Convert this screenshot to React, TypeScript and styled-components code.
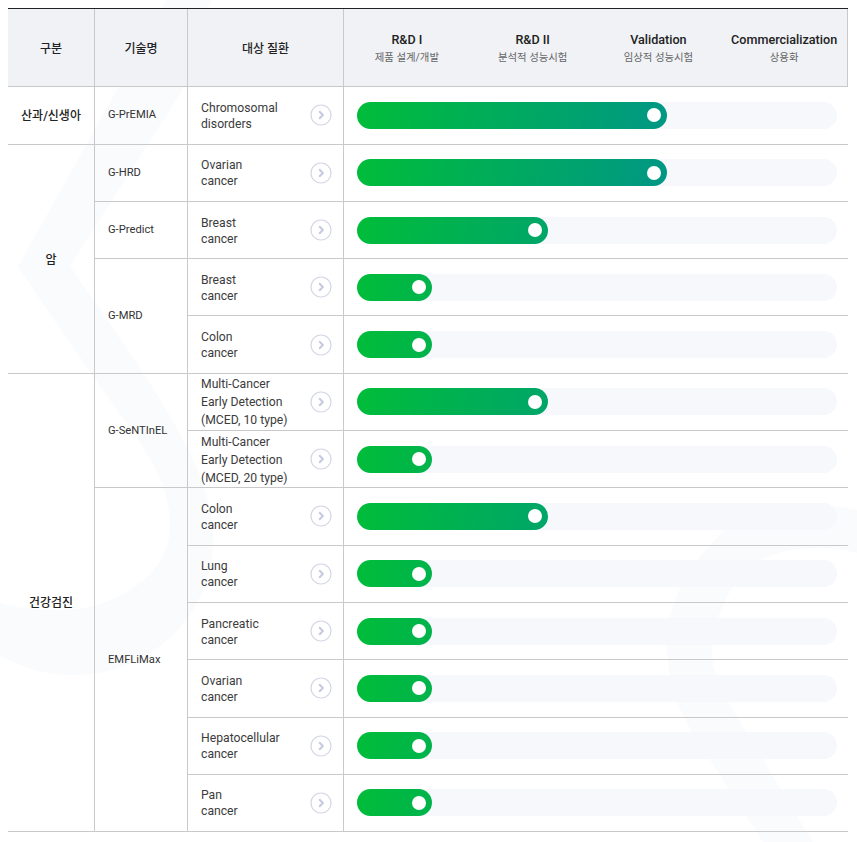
import React from "react";
import styled, { createGlobalStyle } from "styled-components";

const GlobalStyle = createGlobalStyle`
  html, body {
    margin: 0;
    padding: 0;
    background: #fff;
  }
  body {
    font-family: Roboto, "Noto Sans CJK KR", "Noto Sans", sans-serif;
    color: #333;
  }
`;

type Stage = { title: string; sub: string };
type Row = { disease: string[]; width: number; tall?: boolean };
type Tech = { name: string; rows: Row[] };
type Group = { name: string; techs: Tech[] };

const LONG = 310;
const MID = 191;
const SHORT = 75;

const stages: Stage[] = [
  { title: "R&D I", sub: "제품 설계/개발" },
  { title: "R&D II", sub: "분석적 성능시험" },
  { title: "Validation", sub: "임상적 성능시험" },
  { title: "Commercialization", sub: "상용화" },
];

const groups: Group[] = [
  {
    name: "산과/신생아",
    techs: [{ name: "G-PrEMIA", rows: [{ disease: ["Chromosomal", "disorders"], width: LONG }] }],
  },
  {
    name: "암",
    techs: [
      { name: "G-HRD", rows: [{ disease: ["Ovarian", "cancer"], width: LONG }] },
      { name: "G-Predict", rows: [{ disease: ["Breast", "cancer"], width: MID }] },
      {
        name: "G-MRD",
        rows: [
          { disease: ["Breast", "cancer"], width: SHORT },
          { disease: ["Colon", "cancer"], width: SHORT },
        ],
      },
    ],
  },
  {
    name: "건강검진",
    techs: [
      {
        name: "G-SeNTInEL",
        rows: [
          { disease: ["Multi-Cancer", "Early Detection", "(MCED, 10 type)"], width: MID, tall: true },
          { disease: ["Multi-Cancer", "Early Detection", "(MCED, 20 type)"], width: SHORT, tall: true },
        ],
      },
      {
        name: "EMFLiMax",
        rows: [
          { disease: ["Colon", "cancer"], width: MID },
          { disease: ["Lung", "cancer"], width: SHORT },
          { disease: ["Pancreatic", "cancer"], width: SHORT },
          { disease: ["Ovarian", "cancer"], width: SHORT },
          { disease: ["Hepatocellular", "cancer"], width: SHORT },
          { disease: ["Pan", "cancer"], width: SHORT },
        ],
      },
    ],
  },
];

const Page = styled.div`
  position: relative;
  width: 857px;
  height: 842px;
  overflow: hidden;
  padding: 8px 9px 0 8px;
  box-sizing: border-box;
`;

const Watermark = styled.svg`
  position: absolute;
  left: 0;
  top: 0;
  width: 857px;
  height: 842px;
  pointer-events: none;
`;

const Table = styled.div`
  position: relative;
  display: grid;
  grid-template-columns: 87px 93px 156px 504px;
  grid-template-rows: 78.28px repeat(13, 57.3px);
  border-top: 1px solid #222;
`;

const Cell = styled.div`
  box-sizing: border-box;
  display: flex;
  align-items: center;
  border-bottom: 1px solid #c9c9c9;
`;

const HeadCell = styled(Cell)`
  justify-content: center;
  background: #f0f2f6;
  border-right: 1px solid #c9c9c9;
  font-size: 12px;
  font-weight: 500;
  color: #222;

  &:last-of-type {
    border-right: 0;
  }
`;

const StageList = styled(HeadCell)`
  align-items: stretch;
`;

const StageItem = styled.div`
  flex: 1;
  display: flex;
  flex-direction: column;
  align-items: center;
  justify-content: center;
  padding-top: 2px;
`;

const StageTitle = styled.div`
  font-size: 12.6px;
  line-height: 18px;
  font-weight: 500;
  color: #222;
`;

const StageSub = styled.div`
  font-size: 10.4px;
  line-height: 18px;
  font-weight: 400;
  color: #666;
`;

const GroupCell = styled(Cell)<{ $row: number; $span: number }>`
  grid-column: 1;
  grid-row: ${(p) => p.$row} / span ${(p) => p.$span};
  justify-content: center;
  padding-bottom: 1px;
  border-right: 1px solid #c9c9c9;
  font-size: 12px;
  font-weight: 500;
  color: #222;
`;

const TechCell = styled(Cell)<{ $row: number; $span: number }>`
  grid-column: 2;
  grid-row: ${(p) => p.$row} / span ${(p) => p.$span};
  padding: 0 0 1px 13px;
  border-right: 1px solid #c9c9c9;
  font-size: 11.2px;
  color: #333;
`;

const DiseaseCell = styled(Cell)<{ $row: number }>`
  grid-column: 3;
  grid-row: ${(p) => p.$row};
  justify-content: space-between;
  padding: 0 11px 0 13px;
  border-right: 1px solid #c9c9c9;
`;

const DiseaseName = styled.div<{ $tall?: boolean }>`
  padding-top: 1px;
  font-size: 12.2px;
  line-height: ${(p) => (p.$tall ? "18px" : "16px")};
  color: #3c3c3c;
  white-space: nowrap;
`;

const BarCell = styled(Cell)<{ $row: number }>`
  grid-column: 4;
  grid-row: ${(p) => p.$row};
  padding: 0 11px 0 13px;
`;

const Track = styled.div`
  flex: 1;
  height: 27px;
  border-radius: 14px;
  background: #f6f8fc;
`;

const Fill = styled.div`
  position: relative;
  height: 100%;
  border-radius: 14px;
  background-image: linear-gradient(100deg, #00bd39 0%, #009785 100%);
  background-size: 310px 100%;
  background-repeat: no-repeat;
`;

const Knob = styled.span`
  position: absolute;
  right: 6.5px;
  top: 50%;
  width: 14px;
  height: 14px;
  margin-top: -7px;
  border-radius: 50%;
  background: #fff;
`;

const ArrowIcon = () => (
  <svg width="22" height="22" viewBox="0 0 22 22" fill="none">
    <circle cx="11" cy="11" r="10" stroke="#d3d6e4" strokeWidth="1.2" fill="#fff" />
    <path d="M9.2 7.2 12.8 11l-3.6 3.8" stroke="#c6cade" strokeWidth="2" />
  </svg>
);

const App = () => {
  let row = 2;
  const cells: React.ReactNode[] = [];

  groups.forEach((group) => {
    const groupSpan = group.techs.reduce((n, t) => n + t.rows.length, 0);
    cells.push(
      <GroupCell key={group.name} $row={row} $span={groupSpan}>
        {group.name}
      </GroupCell>
    );
    group.techs.forEach((tech) => {
      cells.push(
        <TechCell key={tech.name} $row={row} $span={tech.rows.length}>
          {tech.name}
        </TechCell>
      );
      tech.rows.forEach((item) => {
        cells.push(
          <DiseaseCell key={`d${row}`} $row={row}>
            <DiseaseName $tall={item.tall}>
              {item.disease.map((line) => (
                <div key={line}>{line}</div>
              ))}
            </DiseaseName>
            <ArrowIcon />
          </DiseaseCell>,
          <BarCell key={`b${row}`} $row={row}>
            <Track>
              <Fill style={{ width: item.width }}>
                <Knob />
              </Fill>
            </Track>
          </BarCell>
        );
        row += 1;
      });
    });
  });

  return (
    <>
      <GlobalStyle />
      <Page>
        <Watermark viewBox="0 0 857 842">
          <path
            fill="#fafbfd"
            d="M167 0 18 267 90 372C130 430 170 470 170 527 170 575 115 610 60 610 35 610 15 607 0 603V655C25 670 50 675 75 675 150 675 213 615 213 540 213 480 175 425 145 375L70 266 185 86 211 0Z"
          />
          <path
            fill="#fafbfd"
            d="M857 510C800 498 745 505 715 540 680 575 667 610 667 650 668 690 685 725 710 760L763 842H813L733 710C718 685 710 665 712 645 716 610 735 575 760 560 790 545 830 545 857 553Z"
          />
        </Watermark>
        <Table>
          <HeadCell>구분</HeadCell>
          <HeadCell>기술명</HeadCell>
          <HeadCell>대상 질환</HeadCell>
          <StageList>
            {stages.map((stage) => (
              <StageItem key={stage.title}>
                <StageTitle>{stage.title}</StageTitle>
                <StageSub>{stage.sub}</StageSub>
              </StageItem>
            ))}
          </StageList>
          {cells}
        </Table>
      </Page>
    </>
  );
};

export default App;
